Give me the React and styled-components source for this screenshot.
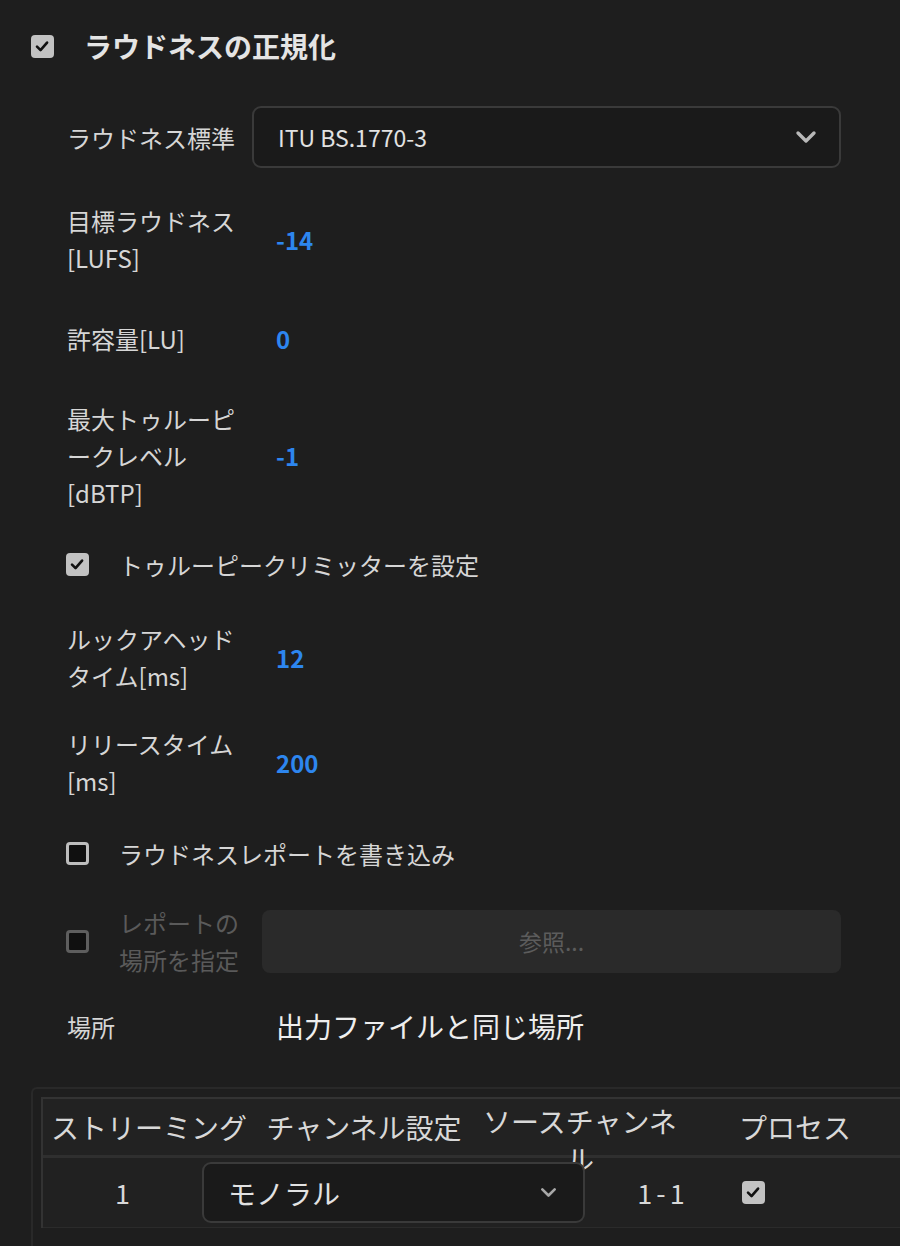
import React from "react";
import styled, { createGlobalStyle } from "styled-components";

const GlobalStyle = createGlobalStyle`
  body {
    margin: 0;
    background: #1e1e1e;
    color: #d8d8d8;
    font-family: "Noto Sans CJK JP", "Noto Sans", sans-serif;
    overflow: hidden;
  }
`;

const Page = styled.div`
  width: 900px;
  height: 1246px;
  overflow: hidden;
  padding-top: 24px;
  box-sizing: border-box;
`;

const TitleRow = styled.div`
  display: flex;
  align-items: center;
  gap: 30px;
  padding-left: 31px;
  height: 44px;
`;

const Title = styled.h2`
  margin: 0;
  font-size: 28px;
  font-weight: 700;
  line-height: 44px;
  color: #e4e4e4;
`;

const Settings = styled.div`
  display: flex;
  flex-direction: column;
  padding: 0 59px 0 66px;
`;

const Row = styled.div`
  display: flex;
  align-items: center;
  margin-top: ${(p) => p.$top}px;
  min-height: ${(p) => p.$h || 0}px;
`;

const Label = styled.div`
  flex: none;
  width: ${(p) => p.$w}px;
  padding-left: ${(p) => (p.$inset ? 1 : 0)}px;
  box-sizing: border-box;
  font-size: 24px;
  line-height: 37px;
  white-space: pre;
  color: ${(p) => (p.$disabled ? "#5a5a5a" : "#d6d6d6")};
`;

const Value = styled.div`
  font-size: 24px;
  font-weight: 700;
  color: #2d86ef;
  line-height: 37px;
`;

const PlainValue = styled.div`
  font-size: 28px;
  line-height: 37px;
  color: #eeeeee;
`;

const Select = styled.div`
  position: relative;
  flex: ${(p) => (p.$width ? "none" : 1)};
  width: ${(p) => (p.$width ? `${p.$width}px` : "auto")};
  height: ${(p) => p.$height}px;
  box-sizing: border-box;
  display: flex;
  align-items: center;
  justify-content: space-between;
  padding: 0 ${(p) => p.$padR}px 0 24px;
  background: #1a1a1a;
  border: 2px solid #3a3a3a;
  border-radius: 9px;
  font-size: ${(p) => p.$font}px;
  color: #e2e2e2;
`;

const Box = styled.span`
  flex: none;
  width: ${(p) => p.$size}px;
  height: ${(p) => p.$size}px;
  box-sizing: border-box;
  border-radius: 4px;
  display: flex;
  align-items: center;
  justify-content: center;
  background: ${(p) => (p.$checked ? "#c2c2c2" : "#101010")};
  border: ${(p) =>
    p.$checked ? "none" : `3px solid ${p.$disabled ? "#5e5e5e" : "#bdbdbd"}`};
`;

const CheckRow = styled(Row)`
  gap: 30px;
`;

const BrowseButton = styled.div`
  flex: 1;
  height: 63px;
  display: flex;
  align-items: center;
  justify-content: center;
  background: #2a2a2a;
  border-radius: 8px;
  font-size: 23px;
  color: #5c5c5c;
`;

const TableFrame = styled.div`
  margin: 42px 0 0 31px;
  width: 900px;
  height: 200px;
  border: 2px solid #292929;
  border-right: none;
  border-radius: 6px 0 0 0;
  padding: 8px 0 0 8px;
`;

const Table = styled.div`
  border-top: 2px solid #333333;
  border-left: 2px solid #333333;
`;

const HeadRow = styled.div`
  display: grid;
  grid-template-columns: 212px 218px 214px 216px;
  grid-template-rows: 56px;
  height: 56px;
  background: #222222;
  border-bottom: 3px solid #2f2f2f;
`;

const HeadCell = styled.div`
  align-self: ${(p) => (p.$wrap ? "start" : "center")};
  padding: ${(p) => (p.$wrap ? "3px 6px 0" : "0")};
  text-align: center;
  font-size: 28px;
  line-height: 38px;
  white-space: ${(p) => (p.$wrap ? "normal" : "nowrap")};
  color: #d8d8d8;
`;

const BodyRow = styled.div`
  display: grid;
  grid-template-columns: 159px 388px 146px 200px;
  align-items: center;
  height: 69px;
  background: #212121;
  border-bottom: 1px solid #2b2b2b;
`;

const BodyCell = styled.div`
  padding-left: ${(p) => p.$pl || 0}px;
  font-size: 27px;
  letter-spacing: ${(p) => p.$spread || 0}px;
  color: #d8d8d8;
  display: flex;
  justify-content: ${(p) => (p.$align === "left" ? "flex-start" : "center")};
`;

const Chevron = ({ size = 22, color = "#b8b8b8" }) => (
  <svg width={size} height={size * 0.64} viewBox="0 0 22 14">
    <path
      d="M3 3 L11 11 L19 3"
      fill="none"
      stroke={color}
      strokeWidth="3.4"
      strokeLinecap="round"
      strokeLinejoin="round"
    />
  </svg>
);

const Checkbox = ({ checked, disabled, size = 23 }) => (
  <Box $checked={checked} $disabled={disabled} $size={size}>
    {checked && (
      <svg width={size * 0.7} height={size * 0.7} viewBox="0 0 16 16">
        <path
          d="M3 8.5 L6.5 12 L13 4.5"
          fill="none"
          stroke="#111"
          strokeWidth="2.6"
          strokeLinecap="round"
          strokeLinejoin="round"
        />
      </svg>
    )}
  </Box>
);

const fields = [
  { label: "目標ラウドネス\n[LUFS]", value: "-14", top: 34 },
  { label: "許容量[LU]", value: "0", top: 44 },
  { label: "最大トゥルーピ\nークレベル\n[dBTP]", value: "-1", top: 43 },
];

const timing = [
  { label: "ルックアヘッド\nタイム[ms]", value: "12", top: 37 },
  { label: "リリースタイム\n[ms]", value: "200", top: 31 },
];

export default function App() {
  return (
    <Page>
      <GlobalStyle />
      <TitleRow>
        <Checkbox checked />
        <Title>ラウドネスの正規化</Title>
      </TitleRow>

      <Settings>
        <Row $top={38} $h={62}>
          <Label $w={186} $inset>ラウドネス標準</Label>
          <Select $height={62} $padR={22} $font={23}>
            ITU BS.1770-3
            <Chevron />
          </Select>
        </Row>

        {fields.map((f) => (
          <Row key={f.label} $top={f.top}>
            <Label $w={210} $inset>{f.label}</Label>
            <Value>{f.value}</Value>
          </Row>
        ))}

        <CheckRow $top={35}>
          <Checkbox checked />
          <Label $w={400}>トゥルーピークリミッターを設定</Label>
        </CheckRow>

        {timing.map((f) => (
          <Row key={f.label} $top={f.top}>
            <Label $w={210} $inset>{f.label}</Label>
            <Value>{f.value}</Value>
          </Row>
        ))}

        <CheckRow $top={36}>
          <Checkbox />
          <Label $w={400}>ラウドネスレポートを書き込み</Label>
        </CheckRow>

        <CheckRow $top={32}>
          <Checkbox disabled />
          <Label $w={113} $disabled>{"レポートの\n場所を指定"}</Label>
          <BrowseButton>参照...</BrowseButton>
        </CheckRow>

        <Row $top={30}>
          <Label $w={210} $inset>場所</Label>
          <PlainValue>出力ファイルと同じ場所</PlainValue>
        </Row>
      </Settings>

      <TableFrame>
        <Table>
          <HeadRow>
            <HeadCell>ストリーミング</HeadCell>
            <HeadCell>チャンネル設定</HeadCell>
            <HeadCell $wrap>ソースチャンネル</HeadCell>
            <HeadCell>プロセス</HeadCell>
          </HeadRow>
          <BodyRow>
            <BodyCell>1</BodyCell>
            <BodyCell $align="left">
              <Select $width={383} $height={61} $padR={26} $font={28}>
                モノラル
                <Chevron size={17} color="#a8a8a8" />
              </Select>
            </BodyCell>
            <BodyCell $spread={4}>1-1</BodyCell>
            <BodyCell $align="left" $pl={6}>
              <Checkbox checked size={23} />
            </BodyCell>
          </BodyRow>
        </Table>
      </TableFrame>
    </Page>
  );
}
